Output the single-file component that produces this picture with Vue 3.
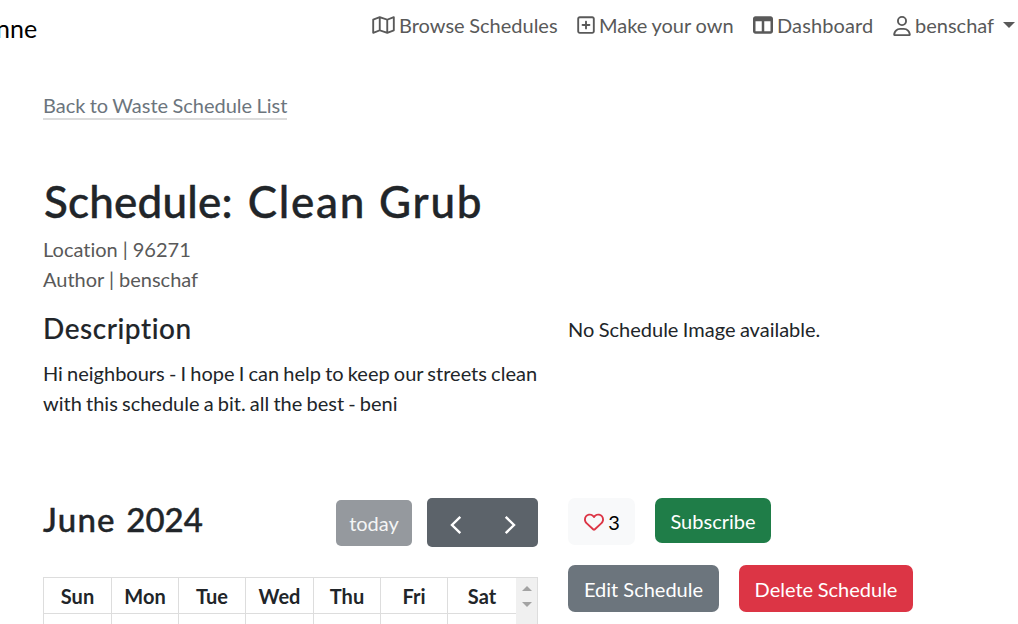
<script setup>
const days = ['Sun', 'Mon', 'Tue', 'Wed', 'Thu', 'Fri', 'Sat']
const nav = [
  { key: 'map', label: 'Browse Schedules', box: '0 0 576 512', d: 'M565.6 36.2C572.1 40.7 576 48.1 576 56V392c0 10-6.2 18.9-15.5 22.4l-168 64c-5.2 2-10.9 2.1-16.1 .3L192.5 417.5l-160 61c-7.4 2.8-15.7 1.8-22.2-2.7S0 463.9 0 456V120c0-10 6.1-18.9 15.5-22.4l168-64c5.2-2 10.9-2.1 16.1-.3L383.5 94.5l160-61c7.4-2.8 15.7-1.8 22.2 2.7zM48 136.5V421.2l120-45.7V90.8L48 136.5zM360 422.7V137.3l-144-48V374.7l144 48zm48-1.5l120-45.7V90.8L408 136.5V421.2z' },
  { key: 'plus', label: 'Make your own', box: '0 0 448 512', d: 'M64 80c-8.8 0-16 7.2-16 16V416c0 8.8 7.2 16 16 16H384c8.8 0 16-7.2 16-16V96c0-8.8-7.2-16-16-16H64zM0 96C0 60.7 28.7 32 64 32H384c35.3 0 64 28.7 64 64V416c0 35.3-28.7 64-64 64H64c-35.3 0-64-28.7-64-64V96zM200 344V280H136c-13.3 0-24-10.7-24-24s10.7-24 24-24h64V168c0-13.3 10.7-24 24-24s24 10.7 24 24v64h64c13.3 0 24 10.7 24 24s-10.7 24-24 24H248v64c0 13.3-10.7 24-24 24s-24-10.7-24-24z' },
  { key: 'table', label: 'Dashboard', box: '0 0 512 512', d: 'M0 96C0 60.7 28.7 32 64 32H448c35.3 0 64 28.7 64 64V416c0 35.3-28.7 64-64 64H64c-35.3 0-64-28.7-64-64V96zm64 64V416H224V160H64zm384 0H288V416H448V160z' },
  { key: 'user', label: 'benschaf', caret: true, box: '0 0 448 512', d: 'M304 128a80 80 0 1 0 -160 0 80 80 0 1 0 160 0zM96 128a128 128 0 1 1 256 0A128 128 0 1 1 96 128zM49.3 464H398.7c-8.9-63.3-63.3-112-129-112H178.3c-65.7 0-120.1 48.7-129 112zM0 482.3C0 383.8 79.8 304 178.3 304h91.4C368.2 304 448 383.8 448 482.3c0 16.4-13.3 29.7-29.7 29.7H29.7C13.3 512 0 498.7 0 482.3z' }
]
</script>

<template>
  <div class="page">
    <header class="bar">
      <span class="brand">nne</span>
      <nav class="nav">
        <a v-for="n in nav" :key="n.key" class="link">
          <svg :class="['icon', n.key]" :viewBox="n.box"><path :d="n.d" /></svg>
          <span>{{ n.label }}</span>
          <i v-if="n.caret" class="caret"></i>
        </a>
      </nav>
    </header>
    <main class="content">
      <a class="back">Back to Waste Schedule List</a>
      <h1><span class="lead">Schedule:</span> Clean Grub</h1>
      <div class="meta">Location | 96271<br />Author | benschaf</div>
      <div class="columns info">
        <section>
          <h2>Description</h2>
          <p>Hi neighbours - I hope I can help to keep our streets clean with this schedule a bit. all the best - beni</p>
        </section>
        <section class="noimage">No Schedule Image available.</section>
      </div>
      <div class="columns lower">
        <section>
          <div class="toolbar">
            <h3>June <span class="year">2024</span></h3>
            <button class="today">today</button>
            <div class="arrows">
              <svg viewBox="0 0 12 20"><path d="M10.3 1.8 2 10l8.3 8.2" /></svg>
              <svg viewBox="0 0 12 20"><path d="M1.7 1.8 10 10l-8.3 8.2" /></svg>
            </div>
          </div>
          <div class="calendar">
            <div class="grid">
              <div v-for="d in days" :key="d" class="day">{{ d }}</div>
              <div v-for="d in days" :key="d + '-cell'" class="cell"></div>
            </div>
            <div class="scroll">
              <i class="up"></i><i class="down"></i><i class="up last"></i>
            </div>
          </div>
        </section>
        <section class="actions">
          <div class="row first">
            <button class="btn like">
              <svg viewBox="0 0 512 512"><path d="M225.8 468.2l-2.5-2.3L48.1 303.2C17.4 274.7 0 234.7 0 192.8v-3.3c0-70.4 50-130.8 119.2-144C158.6 37.9 198.9 47 231 69.6c9 6.4 17.4 13.8 25 22.3c4.2-4.8 8.7-9.2 13.5-13.3c3.7-3.2 7.5-6.2 11.5-9c0 0 0 0 0 0C313.1 47 353.4 37.9 392.8 45.4C462 58.6 512 119.1 512 189.5v3.3c0 41.9-17.4 81.9-48.1 110.4L288.7 465.9l-2.5 2.3c-8.2 7.6-19 11.9-30.2 11.9s-22-4.2-30.2-11.9zM239.1 145c-.4-.3-.7-.7-1-1.1l-17.8-20c0 0-.1-.1-.1-.1c0 0 0 0 0 0c-23.1-25.9-58-37.7-92-31.2C81.6 101.5 48 142.1 48 189.5v3.3c0 28.5 11.9 55.8 32.8 75.2L256 430.7 431.2 268c20.9-19.4 32.8-46.7 32.8-75.2v-3.3c0-47.3-33.6-88-80.1-96.9c-34-6.5-69 5.4-92 31.2c0 0 0 0-.1 .1s0 0-.1 .1l-17.8 20c-.3 .4-.7 .7-1 1.1c-4.5 4.5-10.6 7-16.9 7s-12.4-2.5-16.9-7z" /></svg>
              <span>3</span>
            </button>
            <button class="btn subscribe">Subscribe</button>
          </div>
          <div class="row">
            <button class="btn edit">Edit Schedule</button>
            <button class="btn delete">Delete Schedule</button>
          </div>
        </section>
      </div>
    </main>
  </div>
</template>

<style>
body { margin: 0; overflow: hidden; background: #fff; }
</style>

<style scoped>
* { box-sizing: border-box; }
.page { width: 1018px; height: 624px; overflow: hidden; font: 20px/30px Lato, sans-serif; color: #212529; font-variant-ligatures: none; }
.bar { height: 58px; padding: 10px 3px 0 0; display: flex; justify-content: space-between; align-items: flex-start; }
.brand { margin-left: -4px; font-size: 25px; line-height: 37px; color: #000; }
.nav { display: grid; grid-template-columns: 185px 156px 120px 122px; column-gap: 20px; color: #595959; word-spacing: -0.5px; }
.link { display: flex; align-items: center; white-space: nowrap; }
.icon { height: 20px; fill: currentColor; margin-right: 4px; flex: none; }
.map { width: 23px; }
.plus, .user { width: 18px; }
.user { margin-top: 1px; }
.table { width: 20px; }
.table + span { letter-spacing: 0.12px; }
.caret { margin-left: auto; border: 6px solid transparent; border-top-color: currentColor; border-bottom: 0; }
.content { padding: 32px 0 0 43px; }
.back { display: block; width: 244px; height: 30px; color: #6c757d; border-bottom: 2px solid #dcdcdc; white-space: nowrap; word-spacing: -0.8px; }
h1, h2, h3, p { margin: 0; }
h1, h2, h3 { font-weight: 500; white-space: nowrap; -webkit-text-stroke: 0.15px currentColor; }
h1 { margin-top: 55px; height: 59px; font-size: 44px; line-height: 52px; letter-spacing: 1.75px; -webkit-text-stroke-width: 0.4px; }
.lead { letter-spacing: 0.2px; margin-left: 1px; margin-right: 2px; }
.meta { color: #595959; word-spacing: -0.1px; }
.columns { display: grid; grid-template-columns: 495px 1fr; column-gap: 30px; }
.info { margin-top: 20px; height: 124px; }
h2 { height: 44px; font-size: 28px; line-height: 28px; letter-spacing: 0.55px; }
p { word-spacing: -0.95px; }
.noimage { word-spacing: -0.7px; }
.lower { margin-top: 60px; }
.toolbar { display: flex; height: 49px; align-items: center; }
h3 { flex: 1; font-size: 33px; line-height: 40px; letter-spacing: 1.2px; margin-top: -8px; -webkit-text-stroke-width: 0.4px; }
.year { letter-spacing: 0; margin-left: 1px; }
button { border: 0; font: inherit; }
.today { width: 76px; height: 46px; padding: 0; border-radius: 5px; background: #95999e; color: #f4f5f5; margin-right: 15px; margin-top: 1px; }
.arrows { width: 111px; height: 49px; border-radius: 5px; background: #5c636a; display: flex; align-items: center; padding: 4px 22px 0 23px; justify-content: space-between; }
.arrows svg { width: 12px; height: 20px; fill: none; stroke: #fff; stroke-width: 2.4; }
.calendar { margin-top: 30px; height: 50px; display: flex; border: 1px solid #ddd; border-bottom: 0; }
.grid { flex: 1; display: grid; grid-template-columns: 68px 67px 67px 68px 67px 67px 1fr; grid-template-rows: 36px 14px; }
.day { text-align: center; font-weight: 700; line-height: 37px; border-bottom: 1px solid #ddd; border-right: 1px solid #ddd; height: 36px; }
.cell { border-right: 1px solid #ddd; }
.day:nth-child(7), .cell:last-child { border-right: 0; }
.scroll { width: 21px; background: #f0f0f0; display: flex; flex-direction: column; align-items: center; padding-top: 8px; }
.up, .down { border: 5px solid transparent; flex: none; }
.up { border-bottom-color: #a3a3a3; border-top: 0; }
.down { border-top-color: #a3a3a3; border-bottom: 0; margin-top: 11px; }
.last { margin-top: 17px; }
.row { display: flex; align-items: flex-start; gap: 20px; }
.first { height: 67px; }
.btn { height: 47px; padding: 1px 0 0; border-radius: 7px; color: #fff; text-align: center; }
.like { width: 67px; padding-left: 1px; background: #f8f9fa; color: #000; display: flex; align-items: center; justify-content: center; gap: 4px; }
.like svg { width: 20px; height: 20px; fill: #dc3545; }
.subscribe { width: 116px; height: 45px; background: #1f7d48; }
.edit { width: 151px; background: #6c757d; }
.delete { width: 174px; background: #dc3545; word-spacing: -0.5px; }
</style>
